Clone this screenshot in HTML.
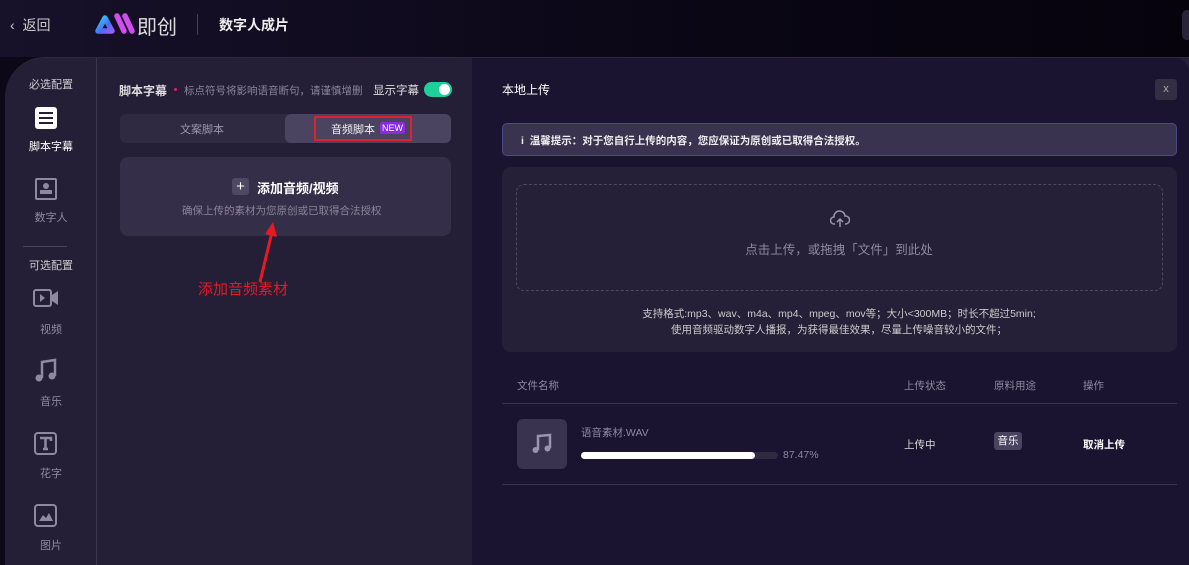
<!DOCTYPE html>
<html><head><meta charset="utf-8"><style>
*{margin:0;padding:0;box-sizing:border-box}
body{width:1189px;height:565px;overflow:hidden;background:#0c0817;font-family:"Liberation Sans","Noto Sans CJK SC",sans-serif;position:relative;color:#fff}
.a{position:absolute}
.top{left:0;top:0;width:1189px;height:57px;background:linear-gradient(90deg,#17112a,#0a0614 60%,#06030d)}
.main{left:5px;top:57px;width:1184px;height:508px;background:#241e37;border-top-left-radius:40px;overflow:hidden;border-top:1px solid #2e2842}
.side{left:0;top:0;width:92px;height:508px;border-right:1px solid #3a3450}
.si{position:absolute;left:0;width:92px;text-align:center;font-size:11px;color:#8e88a0}
.right{left:467px;top:0;width:717px;height:508px;background:#1b1430;border-top-right-radius:14px}
</style></head><body>
<div class="a top"></div>
<div class="a" style="left:10px;top:15px;font-size:14px;color:#ccc">‹ &nbsp;返回</div>
<svg class="a" style="left:94px;top:12px" width="42" height="24" viewBox="0 0 42 24"><defs><linearGradient id="g" x1="0" x2="1" y1="0" y2="1"><stop offset="0" stop-color="#2fd6f0"/><stop offset=".6" stop-color="#4a6cf7"/><stop offset="1" stop-color="#9a5cf7"/></linearGradient></defs><path d="M4 19 L11 6 L18 19 Z" fill="none" stroke="url(#g)" stroke-width="5.5" stroke-linejoin="round"/><path d="M23 4 L30 19 M31 4 L38 19" stroke="#d24df0" stroke-width="5.5" stroke-linecap="round"/></svg>
<div class="a" style="left:137px;top:11px;font-size:20px;color:#ddd">即创</div>
<div class="a" style="left:197px;top:14px;width:1px;height:21px;background:#444"></div>
<div class="a" style="left:219px;top:15px;font-size:14px;font-weight:bold;color:#eee">数字人成片</div>
<div class="a" style="left:1182px;top:10px;width:10px;height:30px;border-radius:5px;background:#2a2438"></div>

<div class="a main">
 <div class="a side">
  <div class="si" style="top:18px;color:#ccc">必选配置</div>
  <div class="a" style="left:30px;top:49px;width:22px;height:22px;background:#fff;border-radius:3px"><div style="margin:5px 4px;height:2px;background:#241e37;box-shadow:0 5px 0 #241e37,0 10px 0 #241e37"></div></div>
  <div class="si" style="top:80px;color:#fff">脚本字幕</div>
  <div class="a" style="left:30px;top:120px;width:22px;height:22px;border:2px solid #8e88a0;border-radius:2px"><div style="width:6px;height:6px;border-radius:50%;background:#8e88a0;margin:3px auto 1px"></div><div style="width:12px;height:4px;background:#8e88a0;margin:0 auto"></div></div>
  <div class="si" style="top:151px">数字人</div>
  <div class="a" style="left:18px;top:188px;width:44px;height:1px;background:#4a4460"></div>
  <div class="si" style="top:199px;color:#ccc">可选配置</div>
  <svg class="a" style="left:28px;top:230px" width="26" height="22"><rect x="1" y="2" width="17" height="16" rx="2" fill="none" stroke="#8e88a0" stroke-width="2"/><path d="M7 6 L12 10 L7 14Z" fill="#8e88a0"/><path d="M19 7 L25 3 V17 L19 13Z" fill="#8e88a0"/></svg>
  <div class="si" style="top:263px">视频</div>
  <svg class="a" style="left:28px;top:300px" width="26" height="26"><path d="M9 20 V4 L22 2 V18" fill="none" stroke="#8e88a0" stroke-width="2.5"/><circle cx="6" cy="20" r="3.5" fill="#8e88a0"/><circle cx="19" cy="18" r="3.5" fill="#8e88a0"/></svg>
  <div class="si" style="top:335px">音乐</div>
  <svg class="a" style="left:29px;top:374px" width="24" height="24"><rect x="1" y="1" width="21" height="21" rx="3" fill="none" stroke="#8e88a0" stroke-width="2"/><path d="M6 6 H17 V9 M11.5 6 V17 M9 17 H14" fill="none" stroke="#8e88a0" stroke-width="2.5"/></svg>
  <div class="si" style="top:407px">花字</div>
  <svg class="a" style="left:29px;top:446px" width="24" height="24"><rect x="1" y="1" width="21" height="21" rx="3" fill="none" stroke="#8e88a0" stroke-width="2"/><path d="M5 17 L9 11 L12 14 L15 9 L19 17Z" fill="#8e88a0"/></svg>
  <div class="si" style="top:479px">图片</div>
 </div>

 <div class="a" style="left:114px;top:24px;font-size:12px;font-weight:bold;color:#ddd">脚本字幕</div>
 <div class="a" style="left:169px;top:30px;width:3px;height:3px;border-radius:50%;background:#e0206a"></div>
 <div class="a" style="left:179px;top:25px;font-size:10.5px;color:#8a849c">标点符号将影响语音断句，请谨慎增删</div>
 <div class="a" style="left:368px;top:24px;font-size:11.5px;color:#ddd">显示字幕</div>
 <div class="a" style="left:419px;top:24px;width:28px;height:15px;border-radius:8px;background:#1fcf9a"><div style="position:absolute;right:2px;top:2px;width:11px;height:11px;border-radius:50%;background:#fff"></div></div>

 <div class="a" style="left:115px;top:56px;width:331px;height:29px;border-radius:6px;background:#2f2942"></div>
 <div class="a" style="left:280px;top:56px;width:166px;height:29px;border-radius:6px;background:#4a4460"></div>
 <div class="a" style="left:175px;top:63px;font-size:11px;color:#9a94ac">文案脚本</div>
 <div class="a" style="left:309px;top:58px;width:98px;height:25px;border:2px solid #e0202a"></div>
 <div class="a" style="left:326px;top:63px;font-size:11px;color:#eee">音频脚本</div>
 <div class="a" style="left:375px;top:64px;font-size:9px;color:#fff;background:#8a2be2;padding:1px 2px;border-radius:2px">NEW</div>

 <div class="a" style="left:115px;top:99px;width:331px;height:79px;border-radius:8px;background:#352e48"></div>
 <div class="a" style="left:227px;top:120px;width:17px;height:17px;border-radius:3px;background:#4f4862;color:#fff;font-size:15px;text-align:center;line-height:17px">+</div>
 <div class="a" style="left:252px;top:120px;font-size:13px;font-weight:bold;color:#fff">添加音频/视频</div>
 <div class="a" style="left:177px;top:145px;font-size:10.5px;color:#8a849c">确保上传的素材为您原创或已取得合法授权</div>
 <svg class="a" style="left:240px;top:162px" width="40" height="70"><path d="M15 62 L27 12" stroke="#e41b23" stroke-width="3"/><path d="M20 14 L28 2 L32 17Z" fill="#e41b23"/></svg>
 <div class="a" style="left:193px;top:220px;font-size:15px;color:#e41b23">添加音频素材</div>

 <div class="a right">
  <div class="a" style="left:30px;top:23px;font-size:12px;color:#fff">本地上传</div>
  <div class="a" style="left:683px;top:21px;width:22px;height:21px;border-radius:3px;background:#342e45;color:#aaa;font-size:11px;text-align:center;line-height:21px">x</div>
  <div class="a" style="left:30px;top:65px;width:675px;height:33px;border-radius:5px;background:#3a3350;border:1px solid #4a4a8a"></div>
  <div class="a" style="left:49px;top:75px;font-size:10.5px;color:#eee;font-weight:bold">i&nbsp; 温馨提示：对于您自行上传的内容，您应保证为原创或已取得合法授权。</div>
  <div class="a" style="left:30px;top:109px;width:675px;height:185px;border-radius:9px;background:#251f37"></div>
  <div class="a" style="left:44px;top:126px;width:647px;height:107px;border:1px dashed #4e485f;border-radius:8px"></div>
  <svg class="a" style="left:358px;top:152px" width="20" height="18"><path d="M5 14 H4 A3.5 3.5 0 0 1 4 7 A5.5 5.5 0 0 1 15 6 A3.5 3.5 0 0 1 16 14 H15" fill="none" stroke="#9a94ac" stroke-width="1.5"/><path d="M10 17 V9 M7 12 L10 9 L13 12" fill="none" stroke="#9a94ac" stroke-width="1.5"/></svg>
  <div class="a" style="left:0;width:734px;top:181px;text-align:center;font-size:12.5px;color:#8e88a0">点击上传，或拖拽「文件」到此处</div>
  <div class="a" style="left:0;width:734px;top:248px;text-align:center;font-size:10.5px;color:#ccc;line-height:16px">支持格式:mp3、wav、m4a、mp4、mpeg、mov等；大小&lt;300MB；时长不超过5min;<br>使用音频驱动数字人播报，为获得最佳效果，尽量上传噪音较小的文件；</div>
  <div class="a" style="left:45px;top:320px;font-size:10.5px;color:#8e88a0">文件名称</div>
  <div class="a" style="left:432px;top:320px;font-size:10.5px;color:#8e88a0">上传状态</div>
  <div class="a" style="left:522px;top:320px;font-size:10.5px;color:#8e88a0">原料用途</div>
  <div class="a" style="left:611px;top:320px;font-size:10.5px;color:#8e88a0">操作</div>
  <div class="a" style="left:30px;top:345px;width:675px;height:1px;background:#3a3450"></div>
  <div class="a" style="left:45px;top:361px;width:50px;height:50px;border-radius:6px;background:#3a3350"></div>
  <svg class="a" style="left:58px;top:373px" width="24" height="24"><path d="M8 19 V5 L20 4 V17" fill="none" stroke="#9a94ac" stroke-width="2.5"/><circle cx="5.5" cy="19" r="3" fill="#9a94ac"/><circle cx="17.5" cy="17.5" r="3" fill="#9a94ac"/></svg>
  <div class="a" style="left:109px;top:367px;font-size:10.5px;color:#8e88a0">语音素材.WAV</div>
  <div class="a" style="left:109px;top:394px;width:197px;height:7px;border-radius:4px;background:#2f2942"><div style="width:174px;height:7px;border-radius:4px;background:#fff"></div></div>
  <div class="a" style="left:311px;top:391px;font-size:10.5px;color:#8e88a0">87.47%</div>
  <div class="a" style="left:432px;top:379px;font-size:10.5px;color:#ddd">上传中</div>
  <div class="a" style="left:522px;top:374px;width:28px;height:18px;border-radius:3px;background:#4a4460;font-size:10.5px;color:#fff;text-align:center;line-height:18px">音乐</div>
  <div class="a" style="left:611px;top:379px;font-size:10.5px;color:#fff;font-weight:bold">取消上传</div>
  <div class="a" style="left:30px;top:426px;width:675px;height:1px;background:#3a3450"></div>
 </div>
</div>
</body></html>
